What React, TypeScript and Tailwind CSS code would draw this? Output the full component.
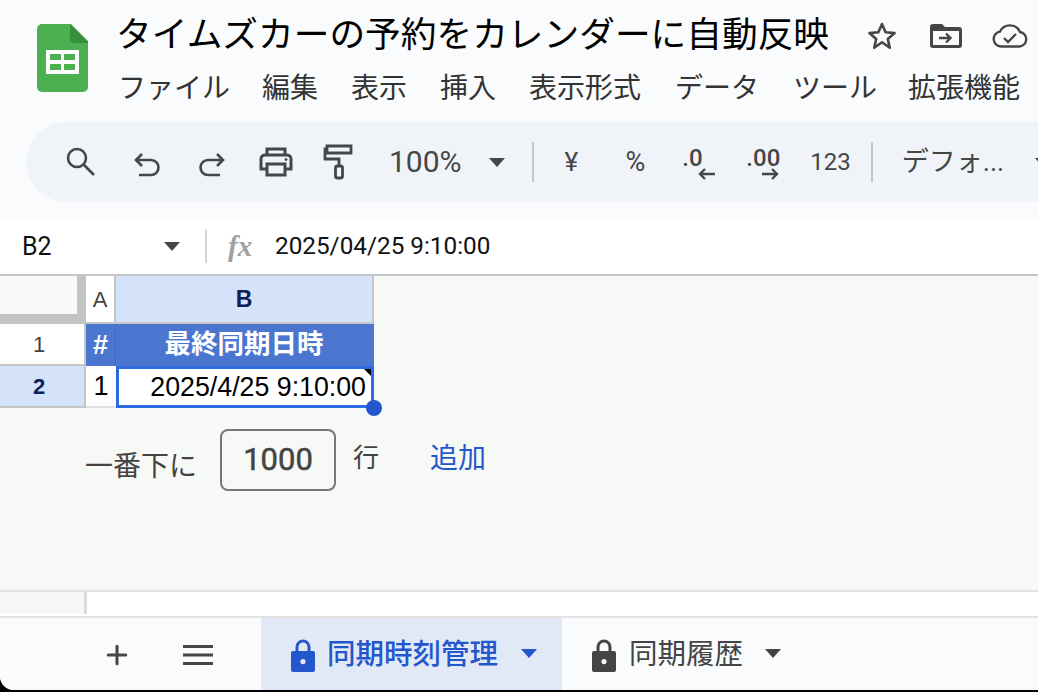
import { Plus } from 'lucide-react';

const sans = "font-['Liberation_Sans','Noto_Sans_CJK_JP',sans-serif]";
const roboto = "font-['Roboto','Noto_Sans_CJK_JP',sans-serif]";

const menus = [
  { label: 'ファイル', width: 'w-[144px]' },
  { label: '編集', width: 'w-[89px]' },
  { label: '表示', width: 'w-[89px]' },
  { label: '挿入', width: 'w-[89px]' },
  { label: '表示形式', width: 'w-[146px]' },
  { label: 'データ', width: 'w-[118px]' },
  { label: 'ツール', width: 'w-[115px]' },
  { label: '拡張機能', width: 'w-[120px]' },
];

function SheetsLogo() {
  return (
    <svg width="52" height="70" viewBox="0 0 52 70" className="shrink-0">
      <path d="M5 1h29l17 17v46a5 5 0 0 1-5 5H5a5 5 0 0 1-5-5V6a5 5 0 0 1 5-5z" fill="#4caf50" />
      <path d="M33 1l18 18v1H37a4 4 0 0 1-4-4z" fill="#388e3c" />
      <path d="M9 27h33v24H9z" fill="#fff" />
      <path d="M13 31h11v6H13zM27 31h11v6H27zM13 41h11v6H13zM27 41h11v6H27z" fill="#4caf50" />
    </svg>
  );
}

function Caret({ className }: { className: string }) {
  return (
    <svg width="16" height="9" viewBox="0 0 16 9" className={`shrink-0 ${className}`}>
      <path d="M0 0h16L8 9z" fill="currentColor" />
    </svg>
  );
}

function Lock({ className }: { className: string }) {
  return (
    <svg width="26" height="34" viewBox="0 0 26 34" className={className}>
      <path d="M7 14V9a6 6 0 0 1 12 0v5" fill="none" stroke="currentColor" strokeWidth="3" />
      <path fillRule="evenodd" d="M3 13h20a2 2 0 0 1 2 2v17a2 2 0 0 1-2 2H3a2 2 0 0 1-2-2V15a2 2 0 0 1 2-2zm10 8a2.6 2.6 0 1 0 0 5.2 2.6 2.6 0 0 0 0-5.200z" fill="currentColor" />
    </svg>
  );
}

function TitleIcons() {
  return (
    <div className="ml-[38px] flex items-center text-[#444746]">
      <svg width="30" height="30" viewBox="0 0 30 30" fill="none" stroke="currentColor" strokeWidth="2.600" strokeLinejoin="round">
        <path d="M15 3l3.600 8.300 9 .8-6.800 5.900 2 8.800L15 21.200 7.200 26.800l2-8.800L2.400 12.100l9-.8z" />
      </svg>
      <svg width="32" height="24" viewBox="0 0 32 24" className="ml-[33px]">
        <path fillRule="evenodd" d="M3 0h9l3 3h14a3 3 0 0 1 3 3v15a3 3 0 0 1-3 3H3a3 3 0 0 1-3-3V3a3 3 0 0 1 3-3zm0 7v14h26V7z" fill="currentColor" />
        <path d="M9 14h11M16 9.500l4.500 4.500-4.500 4.500" fill="none" stroke="currentColor" strokeWidth="2.400" />
      </svg>
      <svg width="36" height="24" viewBox="0 0 36 24" fill="none" stroke="currentColor" strokeWidth="2.400" className="ml-[30px]">
        <path d="M9 22.500a7.500 7.500 0 0 1-1-14.900A11 11 0 0 1 28 8a7.300 7.300 0 0 1-.5 14.500z" />
        <path d="M12 14l4 4 8-8" />
      </svg>
    </div>
  );
}

function Toolbar() {
  return (
    <div className="ml-[26px] flex h-[80px] items-center overflow-hidden rounded-l-[40px] bg-[#f0f4f8] text-[#444746]">
      <div className="flex h-full w-[94px] shrink-0 items-center justify-end rounded-l-[40px] pr-[24px]">
        <svg width="32" height="32" viewBox="0 0 32 32" fill="none" stroke="currentColor" strokeWidth="2.600">
          <circle cx="13" cy="12" r="9" />
          <path d="M19.500 18.500L30 29" />
        </svg>
      </div>
      <svg width="28" height="26" viewBox="0 0 28 26" fill="none" stroke="currentColor" strokeWidth="2.600" className="ml-[14px] mt-[6px] shrink-0">
        <path d="M8 2L2 8l6 6M2 8h15a7.500 7.500 0 0 1 0 15H5" />
      </svg>
      <svg width="28" height="26" viewBox="0 0 28 26" fill="none" stroke="currentColor" strokeWidth="2.600" className="ml-[35px] mt-[6px] shrink-0">
        <path d="M20 2l6 6-6 6M26 8H11a7.500 7.500 0 0 0 0 15h12" />
      </svg>
      <svg width="34" height="30" viewBox="0 0 34 30" fill="none" stroke="currentColor" strokeWidth="3" className="ml-[34px] shrink-0">
        <path d="M8 8V2h18v6M8 22H2V12a4 4 0 0 1 4-4h22a4 4 0 0 1 4 4v10h-6" />
        <path d="M8 17h18v11H8z" />
        <circle cx="27" cy="12.500" r="1" fill="currentColor" strokeWidth="1" />
      </svg>
      <svg width="30" height="36" viewBox="0 0 30 36" fill="none" stroke="currentColor" strokeWidth="2.800" className="ml-[30px] shrink-0">
        <path d="M4 2h24v7H4zM4 5H2v10h14v7" />
        <rect x="12.500" y="22" width="7" height="12" rx="2" />
      </svg>
      <span className={`${roboto} ml-[36px] shrink-0 text-[30px] leading-none`}>100%</span>
      <Caret className="ml-[27px] mt-[1px] text-[#444746]" />
      <div className="ml-[27px] h-[40px] w-[2px] shrink-0 bg-[#c7c7c7]" />
      <span className={`${roboto} ml-[31px] w-[18px] shrink-0 text-[26px] leading-none`}>¥</span>
      <span className={`${roboto} ml-[43px] shrink-0 text-[27px] leading-none`}>%</span>
      <div className="relative ml-[37px] h-[36px] w-[36px] shrink-0">
        <span className={`${roboto} absolute left-0 top-[2px] text-[24px] font-medium leading-none`}>.0</span>
        <svg width="18" height="14" viewBox="0 0 18 14" fill="none" stroke="currentColor" strokeWidth="2.400" className="absolute left-[16px] top-[23px]">
          <path d="M7 2L2 7l5 5M2 7h15" />
        </svg>
      </div>
      <div className="relative ml-[28px] h-[36px] w-[40px] shrink-0">
        <span className={`${roboto} absolute left-0 top-[2px] text-[24px] font-medium leading-none`}>.00</span>
        <svg width="18" height="14" viewBox="0 0 18 14" fill="none" stroke="currentColor" strokeWidth="2.400" className="absolute left-[15px] top-[23px]">
          <path d="M11 2l5 5-5 5M1 7h15" />
        </svg>
      </div>
      <span className={`${roboto} ml-[24px] shrink-0 text-[24px] leading-none`}>123</span>
      <div className="ml-[20px] h-[40px] w-[2px] shrink-0 bg-[#c7c7c7]" />
      <span className={`${roboto} ml-[29px] shrink-0 whitespace-nowrap text-[27px] leading-none`}>デフォ...</span>
      <Caret className="ml-[31px] text-[#444746]" />
    </div>
  );
}

export default function App() {
  return (
    <div className={`${roboto} relative flex h-[692px] w-[1038px] flex-col overflow-hidden bg-black`}>
      <div className="flex h-[690px] flex-col overflow-hidden rounded-bl-[14px] bg-[#f9fbfd]">
        {/* title + menus */}
        <div className="flex h-[122px] shrink-0 overflow-hidden pl-[37px] pt-[23px]">
          <SheetsLogo />
          <div className="ml-[29px] min-w-0 flex-1">
            <div className="mt-[-3px] ml-[-2px] flex h-[32px] items-center whitespace-nowrap">
              <span className="text-[35.700px] leading-none text-black">タイムズカーの予約をカレンダーに自動反映</span>
              <TitleIcons />
            </div>
            <div className="mt-[21px] flex whitespace-nowrap text-[28px] leading-[32px] text-[#333]">
              {menus.map(m => (
                <span key={m.label} className={`${m.width} shrink-0`}>{m.label}</span>
              ))}
            </div>
          </div>
        </div>
        <Toolbar />
        <div className="h-[16px] shrink-0" />
        {/* formula bar */}
        <div className="flex h-[58px] shrink-0 items-center border-b-2 border-[#c4c7c5] bg-white">
          <span className="ml-[22px] w-[142px] text-[25px] leading-none text-[#111]">B2</span>
          <Caret className="text-[#444746]" />
          <div className="ml-[25px] h-[34px] w-[2px] bg-[#d4d4d4]" />
          <span className="ml-[21px] w-[35px] font-['Liberation_Serif',serif] text-[29px] font-bold italic leading-none text-[#a0a0a0]">fx</span>
          <span className={`${roboto} ml-[12px] text-[24.300px] leading-none text-[#111]`}>2025/04/25 9:10:00</span>
        </div>
        {/* grid */}
        <div className="flex min-h-0 flex-1 flex-col bg-[#f7f9f6]">
          <div className={`${sans} grid w-[374px] grid-cols-[86px_30px_258px] grid-rows-[48px_42px_42px]`}>
            <div className="border-r-[9px] border-b-[10px] border-l-0 border-[#c4c4c4] bg-[#f8f9fa]" />
            <div className="flex items-center justify-center border-r-2 border-b-2 border-[#c4c7c5] bg-white text-[22px] text-[#444]">A</div>
            <div className="flex items-center justify-center border-r-2 border-b-2 border-[#c4c7c5] bg-[#d4e2fa] text-[23px] font-bold text-[#0b2157]">B</div>
            <div className="flex items-center justify-center border-r-2 border-b-2 border-[#c4c7c5] bg-white pr-[6px] text-[22px] text-[#444]">1</div>
            <div className="flex items-center justify-center border-r border-[#3f6bbd] bg-[#4a76d0] text-[27px] font-bold text-white">#</div>
            <div className="flex items-center justify-center bg-[#4a76d0] pr-[2px] text-[26.500px] font-bold text-white">最終同期日時</div>
            <div className="flex items-center justify-center border-r-2 border-b-2 border-[#c4c7c5] bg-[#d4e2fa] pr-[6px] text-[22px] font-bold text-[#0b2157]">2</div>
            <div className="flex items-center justify-center border-b-2 border-[#e0e0e0] bg-white text-[27px] text-black">1</div>
            <div className="relative flex items-center justify-end border-[3px] border-[#2f6be0] bg-white pr-[5px] text-[26.750px] leading-none text-black">
              2025/4/25 9:10:00
              <div className="absolute top-0 right-0 h-0 w-0 border-t-[7px] border-l-[7px] border-t-black border-l-transparent" />
              <div className="absolute right-[-11px] bottom-[-11px] h-[16px] w-[16px] rounded-full bg-[#2456cc]" />
            </div>
          </div>
          <div className="flex items-start pt-[21px] pl-[85px]">
            <span className="mt-[22px] w-[135px] text-[28px] leading-[32px] text-[#444]">一番下に</span>
            <div className={`${roboto} flex h-[62px] w-[116px] items-center justify-center rounded-[8px] border-2 border-[#777] text-[31px] text-[#444] [-webkit-text-stroke:0.5px_#444]`}>1000</div>
            <span className="mt-[13px] ml-[17px] w-[77px] text-[26px] leading-[32px] text-[#444]">行</span>
            <span className="mt-[14px] text-[28px] leading-[32px] text-[#2456cc]">追加</span>
          </div>
        </div>
        {/* horizontal scrollbar strip */}
        <div className="h-[28px] shrink-0 border-y-2 border-[#e3e3e3] bg-white">
          <div className="flex h-[22px]">
            <div className="h-full w-[84px] bg-[#f6f6f6]" />
            <div className="h-full w-[3px] bg-[#dcdcdc]" />
          </div>
        </div>
        {/* sheet tabs */}
        <div className="flex h-[72px] shrink-0 items-stretch bg-[#f9fbfd]">
          <div className="flex w-[261px] items-center pt-[2px] text-[#444746]">
            <Plus size={30} strokeWidth={2.400} className="ml-[102px]" />
            <svg width="30" height="20" viewBox="0 0 30 20" className="ml-[51px]">
              <path d="M0 0h30v3H0zM0 8.500h30v3H0zM0 17h30v3H0z" fill="currentColor" />
            </svg>
          </div>
          <div className="flex w-[301px] items-center bg-[#e1e9f7] pl-[29px] pt-[2px] text-[#2456cc]">
            <Lock className="shrink-0" />
            <span className="ml-[11px] w-[194px] shrink-0 text-[28.500px] font-medium leading-none">同期時刻管理</span>
            <Caret className="mt-[-4px]" />
          </div>
          <div className="flex items-center pl-[29px] pt-[2px] text-[#444]">
            <Lock className="shrink-0" />
            <span className="ml-[12px] w-[136px] shrink-0 text-[28.500px] leading-none">同期履歴</span>
            <Caret className="mt-[-4px]" />
          </div>
        </div>
      </div>
    </div>
  );
}
